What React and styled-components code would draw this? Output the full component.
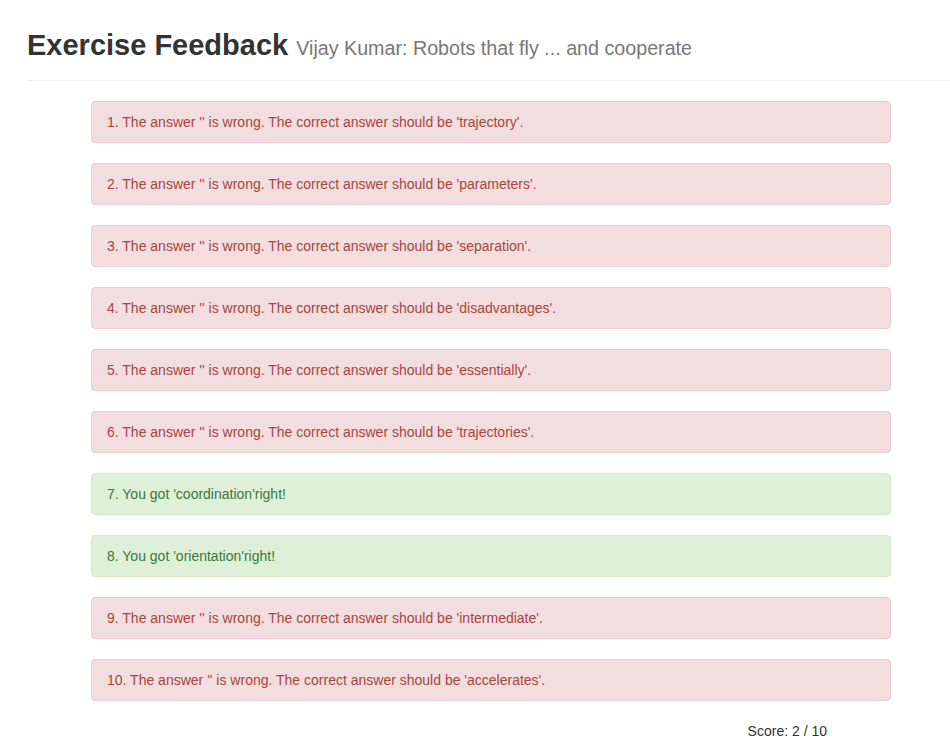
import * as React from 'react';
import styled, { createGlobalStyle } from 'styled-components';

const GlobalStyle = createGlobalStyle`
  body {
    margin: 0;
    background: #fff;
    color: #333;
    font-family: "Liberation Sans", Arial, sans-serif;
    font-size: 14px;
    line-height: 20px;
  }
`;

const Page = styled.div`
  padding: 29px 0 0 27px;
`;

const PageHeader = styled.div`
  padding-bottom: 8px;
  margin-bottom: 20px;
  border-bottom: 1px solid #eee;
`;

const Title = styled.h1`
  margin: 0 0 10px;
  font-size: 29px;
  line-height: 33px;
  font-weight: 700;
  color: #333;
`;

const Subtitle = styled.small`
  font-size: 19.7px;
  line-height: 1;
  font-weight: 400;
  color: #777;
`;

const List = styled.div`
  width: 800px;
  margin-left: 64px;
`;

const Alert = styled.div`
  padding: 10px 15px;
  margin-bottom: 20px;
  border: 1px solid ${(p) => (p.$ok ? '#d6e9c6' : '#ebccd1')};
  border-radius: 4px;
  background: ${(p) => (p.$ok ? '#dff0d8' : '#f2dede')};
  color: ${(p) => (p.$ok ? '#3c763d' : '#a94442')};
`;

const Score = styled.div`
  width: 800px;
  margin-left: 64px;
  padding-right: 64px;
  box-sizing: border-box;
  text-align: right;
`;

const results = [
  { answer: 'trajectory' },
  { answer: 'parameters' },
  { answer: 'separation' },
  { answer: 'disadvantages' },
  { answer: 'essentially' },
  { answer: 'trajectories' },
  { answer: 'coordination', ok: true },
  { answer: 'orientation', ok: true },
  { answer: 'intermediate' },
  { answer: 'accelerates' },
];

const App = () => (
  <Page>
    <GlobalStyle />
    <PageHeader>
      <Title>
        Exercise Feedback <Subtitle>Vijay Kumar: Robots that fly ... and cooperate</Subtitle>
      </Title>
    </PageHeader>
    <List>
      {results.map((r, i) => (
        <Alert key={i} $ok={r.ok}>
          {r.ok
            ? `${i + 1}. You got '${r.answer}'right!`
            : `${i + 1}. The answer '' is wrong. The correct answer should be '${r.answer}'.`}
        </Alert>
      ))}
    </List>
    <Score>Score: 2 / 10</Score>
  </Page>
);

export default App;
